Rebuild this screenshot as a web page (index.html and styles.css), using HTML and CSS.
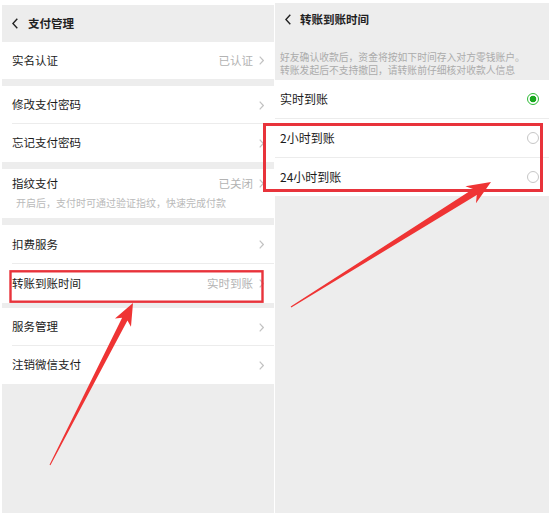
FILE: index.html
```html
<!DOCTYPE html>
<html lang="zh-CN">
<head>
<meta charset="utf-8">
<title>支付管理</title>
<link rel="stylesheet" href="styles.css">
</head>
<body>
<div class="screen">
  <section class="panel panel-left">
    <header class="bar">
      <svg class="back" width="6" height="11" viewBox="0 0 6 11"><polyline points="5.3,0.8 0.9,5.5 5.3,10.2" fill="none" stroke="#222" stroke-width="1.4"/></svg>
      <span class="bar-title">支付管理</span>
    </header>

    <div class="group group-first">
      <div class="row"><span class="label">实名认证</span><span class="value">已认证</span><svg class="chev" width="5" height="9" viewBox="0 0 5 9"><polyline points="0.7,0.7 4.3,4.5 0.7,8.3" fill="none" stroke="#c3c3c3" stroke-width="1.2"/></svg></div>
    </div>

    <div class="group">
      <div class="row row-line"><span class="label">修改支付密码</span><svg class="chev" width="5" height="9" viewBox="0 0 5 9"><polyline points="0.7,0.7 4.3,4.5 0.7,8.3" fill="none" stroke="#c3c3c3" stroke-width="1.2"/></svg></div>
      <div class="row"><span class="label">忘记支付密码</span><svg class="chev" width="5" height="9" viewBox="0 0 5 9"><polyline points="0.7,0.7 4.3,4.5 0.7,8.3" fill="none" stroke="#c3c3c3" stroke-width="1.2"/></svg></div>
    </div>

    <div class="group">
      <div class="row-tall">
        <div class="row-tall-top"><span class="label">指纹支付</span><span class="value">已关闭</span><svg class="chev" width="5" height="9" viewBox="0 0 5 9"><polyline points="0.7,0.7 4.3,4.5 0.7,8.3" fill="none" stroke="#c3c3c3" stroke-width="1.2"/></svg></div>
        <div class="sub">开启后，支付时可通过验证指纹，快速完成付款</div>
      </div>
    </div>

    <div class="group group-tall-rows">
      <div class="row row-line"><span class="label">扣费服务</span><svg class="chev" width="5" height="9" viewBox="0 0 5 9"><polyline points="0.7,0.7 4.3,4.5 0.7,8.3" fill="none" stroke="#c3c3c3" stroke-width="1.2"/></svg></div>
      <div class="row"><span class="label">转账到账时间</span><span class="value">实时到账</span><svg class="chev" width="5" height="9" viewBox="0 0 5 9"><polyline points="0.7,0.7 4.3,4.5 0.7,8.3" fill="none" stroke="#c3c3c3" stroke-width="1.2"/></svg></div>
    </div>

    <div class="group group-tight">
      <div class="row row-line"><span class="label">服务管理</span><svg class="chev" width="5" height="9" viewBox="0 0 5 9"><polyline points="0.7,0.7 4.3,4.5 0.7,8.3" fill="none" stroke="#c3c3c3" stroke-width="1.2"/></svg></div>
      <div class="row"><span class="label">注销微信支付</span><svg class="chev" width="5" height="9" viewBox="0 0 5 9"><polyline points="0.7,0.7 4.3,4.5 0.7,8.3" fill="none" stroke="#c3c3c3" stroke-width="1.2"/></svg></div>
    </div>
  </section>

  <section class="panel panel-right">
    <header class="bar bar-right">
      <svg class="back" width="6" height="11" viewBox="0 0 6 11"><polyline points="5.3,0.8 0.9,5.5 5.3,10.2" fill="none" stroke="#222" stroke-width="1.4"/></svg>
      <span class="bar-title">转账到账时间</span>
    </header>
    <div class="notice">
      <div class="notice-line">好友确认收款后，资金将按如下时间存入对方零钱账户。</div>
      <div class="notice-line">转账发起后不支持撤回，请转账前仔细核对收款人信息</div>
    </div>
    <div class="options">
      <div class="opt opt-line"><span class="opt-label">实时到账</span><span class="radio radio-on"></span></div>
      <div class="opt opt-line"><span class="opt-label">2小时到账</span><span class="radio"></span></div>
      <div class="opt opt-last"><span class="opt-label">24小时到账</span><span class="radio"></span></div>
    </div>
  </section>
</div>

<svg class="marks" width="553" height="513" viewBox="0 0 553 513">
  <rect x="10.5" y="271.3" width="252" height="30.4" fill="none" stroke="#e8333b" stroke-width="2.4"/>
  <rect x="264.5" y="124.5" width="277" height="66" fill="none" stroke="#e8333b" stroke-width="3"/>
  <polygon fill="#ef3434" points="133,303 130.98,326.68 127.46,320.39 50.45,465.23 49.55,464.77 122.12,317.65 114.96,318.48"/>
  <polygon fill="#ef3434" points="491,182 475.95,203.2 476.75,195.04 291.32,307.51 290.68,306.49 473.03,189.1 465.35,186.24"/>
</svg>
</body>
</html>
```

FILE: styles.css
```css
* { box-sizing: border-box; }

html, body {
  margin: 0;
  padding: 0;
  background: #ffffff;
  width: 553px;
  height: 513px;
  overflow: hidden;
  font-family: "Noto Sans CJK SC", "Noto Sans", sans-serif;
  color: #1b1b1b;
}

.screen {
  display: flex;
  align-items: stretch;
  height: 513px;
}

.panel {
  background: #ededed;
}

.panel-left {
  width: 272px;
  margin: 5px 0 0 2px;
}

.panel-right {
  width: 274px;
  margin: 3px 0 0 1px;
}

.bar {
  height: 37px;
  display: flex;
  align-items: center;
  padding-left: 10px;
  gap: 10px;
}

.bar-right {
  height: 33px;
  gap: 9px;
}

.back { display: block; flex: none; }

.bar-title {
  font-size: 11.5px;
  font-weight: 700;
  color: #1f1f1f;
  line-height: 1;
}

.group {
  background: #ffffff;
  margin-top: 7px;
}

.group-first { margin-top: 0; }
.group-tight { margin-top: 5px; }

.row {
  height: 38px;
  display: flex;
  align-items: center;
  padding: 0 10px;
  font-size: 11.5px;
  position: relative;
}

.group-first .row { height: 37px; }
.group-tall-rows .row { height: 39px; }

.row-line::after {
  content: "";
  position: absolute;
  left: 10px;
  right: 0;
  bottom: 0;
  height: 1px;
  background: #ececec;
}

.label {
  flex: 1;
  white-space: nowrap;
  line-height: 1;
}

.value {
  color: #b3b3b3;
  margin-right: 6px;
  white-space: nowrap;
  line-height: 1;
}

.chev { display: block; flex: none; }

.row-tall {
  padding: 7px 10px 9px;
}

.row-tall-top {
  display: flex;
  align-items: center;
  height: 15px;
  font-size: 11.5px;
}

.sub {
  margin: 5px 0 0 4px;
  font-size: 10px;
  line-height: 13px;
  color: #bababa;
  white-space: nowrap;
}

.notice {
  padding: 15px 6px 0 5px;
  height: 44px;
  font-size: 9.8px;
  color: #ababab;
  white-space: nowrap;
}

.notice-line {
  height: 12.5px;
  line-height: 12.5px;
}

.options {
  background: #ffffff;
}

.opt {
  height: 39px;
  display: flex;
  align-items: center;
  padding: 0 10px 0 5px;
  font-size: 12px;
  position: relative;
}

.opt-last { height: 38px; }

.opt-line { border-bottom: 1px solid #ececec; }

.opt-label {
  flex: 1;
  line-height: 1;
  white-space: nowrap;
}

.radio {
  width: 12px;
  height: 12px;
  border-radius: 50%;
  border: 1px solid #c6c6c6;
  background: #fff;
  flex: none;
}

.radio-on {
  border: 1.5px solid #2dbb35;
  background: radial-gradient(circle, #19a81f 0 3.2px, #ffffff 3.6px);
}

.marks {
  position: absolute;
  top: 0;
  left: 0;
  pointer-events: none;
}
```
